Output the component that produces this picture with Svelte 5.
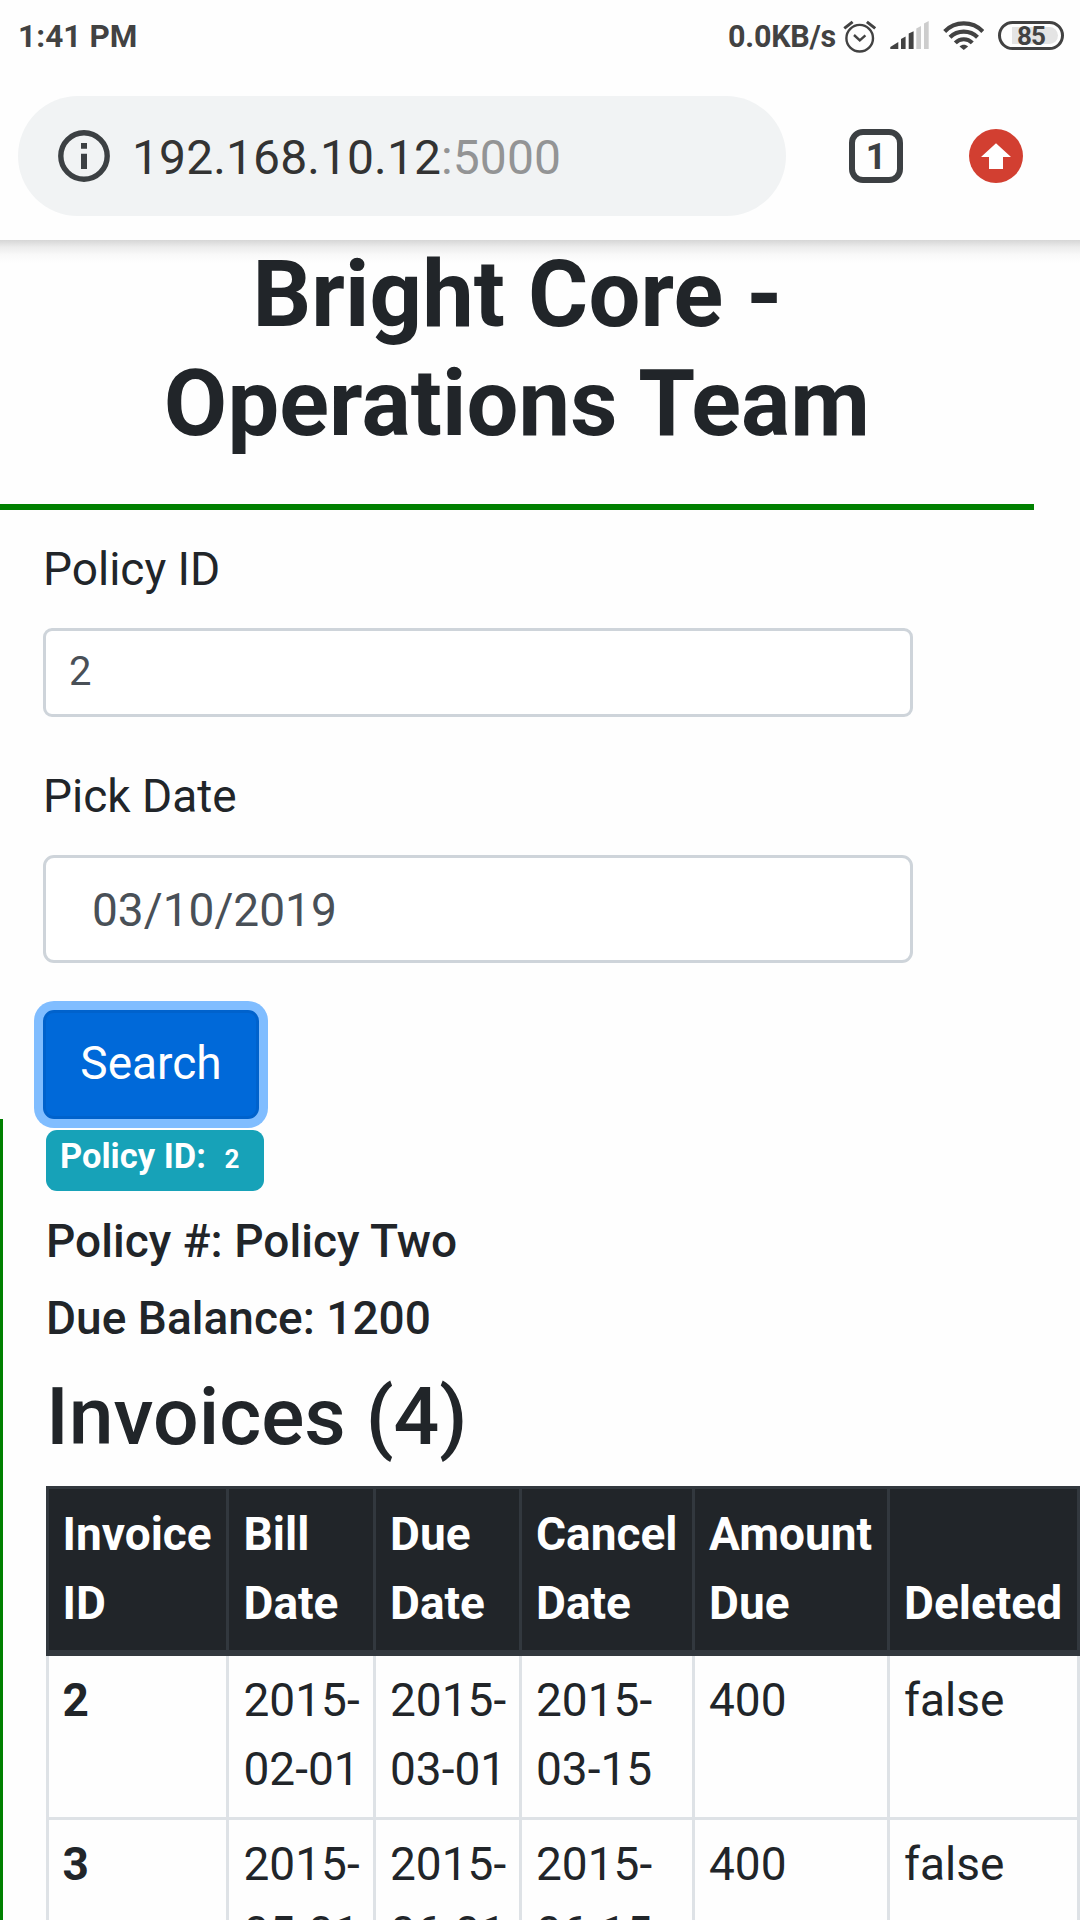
<script>
  let policyId = $state('2');
  let date = $state('03/10/2019');

  const columns = [
    ['Invoice', 'ID'],
    ['Bill', 'Date'],
    ['Due', 'Date'],
    ['Cancel', 'Date'],
    ['Amount', 'Due'],
    ['Deleted'],
  ];

  const invoices = [
    { id: 2, dates: [['2015-', '02-01'], ['2015-', '03-01'], ['2015-', '03-15']], amount: 400, deleted: false },
    { id: 3, dates: [['2015-', '05-01'], ['2015-', '06-01'], ['2015-', '06-15']], amount: 400, deleted: false },
  ];
</script>

<div class="screen">
  <div class="status">
    <span class="time">1:41 PM</span>
    <span class="speed">0.0KB/s</span>
    <svg class="alarm" width="35" height="72" viewBox="842 0 35 72" fill="none" stroke="#424242">
      <circle cx="859.7" cy="38.2" r="13.3" stroke-width="2.4" />
      <path d="M844.3 28.4l8.3-6.6M866.9 21.8l8.3 6.6" stroke-width="3" />
      <path d="M854 35l5.8 5.3 5.6-5" stroke-width="2.4" />
    </svg>
    <svg class="signal" width="39" height="72" viewBox="890 0 39 72">
      <path fill="#424242" d="M890.3 49v-2l8-5v7zM901 49V39l4.6-2.5V49zM908.7 49V33.500l4.9-2.300V49z" />
      <path fill="#cdcdcd" d="M916.300 49V28.500l4.700-2.500V49zM924 49V23.500l4.700-2.500V49z" />
    </svg>
    <svg class="wifi" width="41" height="72" viewBox="943 0 41 72" fill="none" stroke="#424242" stroke-width="4.100">
      <path d="M944.700 31.500C955 20.700 972.500 20.700 982.800 31.500" />
      <path d="M950 37.300C957.500 29.700 970 29.700 977.500 37.300" />
      <path d="M955.300 42.900C960 38 967.500 38 972.300 42.900" />
      <path d="M963.800 50l-4.300-3.500c2.500-2.300 6.100-2.300 8.600 0z" fill="#424242" stroke="none" />
    </svg>
    <div class="battery"><span>85</span></div>
  </div>

  <div class="toolbar">
    <div class="address">
      <svg width="52" height="52" viewBox="0 0 52 52">
        <circle cx="26" cy="26" r="23.200" fill="none" stroke="#3c4043" stroke-width="5.400" />
        <path fill="#3c4043" d="M23 13h6v5.700h-6zM23 23.700h6V39h-6z" />
      </svg>
      <span class="url">192.168.10.12<span class="port">:5000</span></span>
    </div>
    <div class="tabs">1</div>
    <svg class="update" width="54" height="54" viewBox="0 0 54 54">
      <circle cx="27" cy="27" r="27" fill="#d23f31" />
      <path fill="#fff" d="M27 14.300L42 28h-8v12H20V28h-8z" />
    </svg>
  </div>

  <main>
    <h1>Bright Core -<br />Operations Team</h1>

    <form>
      <label for="policy">Policy ID</label>
      <input id="policy" class="small" bind:value={policyId} />
      <label for="date">Pick Date</label>
      <input id="date" class="large" bind:value={date} />
      <button type="button">Search</button>
    </form>

    <section>
      <div class="badge">Policy ID: <span>2</span></div>
      <h6>Policy #: Policy Two</h6>
      <h6>Due Balance: 1200</h6>
      <h2>Invoices (4)</h2>

      <div class="table">
        {#each columns as lines}
          <div class="cell head">
            {#each lines as line}<div>{line}</div>{/each}
          </div>
        {/each}
        {#each invoices as invoice}
          <div class="cell id">{invoice.id}</div>
          {#each invoice.dates as lines}
            <div class="cell">
              {#each lines as line}<div>{line}</div>{/each}
            </div>
          {/each}
          <div class="cell">{invoice.amount}</div>
          <div class="cell">{invoice.deleted}</div>
        {/each}
      </div>
    </section>
  </main>
</div>

<style>
  :global(body) {
    margin: 0;
    background: #fff;
  }
  .screen {
    width: 1080px;
    height: 1920px;
    overflow: hidden;
    background: #fefefe;
    color: #212529;
    font-family: Roboto, 'Liberation Sans', sans-serif;
    font-size: 46px;
    line-height: 69px;
  }
  .screen * {
    box-sizing: border-box;
  }
  svg {
    display: block;
    flex: none;
  }

  .status {
    display: flex;
    height: 72px;
    padding: 0 16px 0 18px;
    color: #424242;
    font-size: 31.500px;
    font-weight: 700;
    letter-spacing: 0.1px;
    line-height: 74px;
    white-space: nowrap;
  }
  .speed {
    margin-left: auto;
    font-size: 30.500px;
    letter-spacing: -0.25px;
    line-height: 73px;
  }
  .alarm {
    margin-left: 6px;
  }
  .signal {
    margin-left: 13px;
  }
  .wifi {
    margin-left: 14px;
  }
  .battery {
    width: 66px;
    height: 29px;
    margin: 21px 0 0 14px;
    padding: 3px;
    border: 3px solid #424242;
    border-radius: 15px;
  }
  .battery span {
    display: block;
    width: 46px;
    height: 17px;
    margin-left: 8px;
    border-radius: 0 9px 9px 0;
    background: #e4e4e4;
    font-size: 26px;
    letter-spacing: -1px;
    line-height: 19px;
    text-indent: 5px;
  }

  .toolbar {
    display: flex;
    align-items: center;
    height: 168px;
    padding: 0 57px 0 18px;
  }
  .address {
    display: flex;
    align-items: center;
    width: 768px;
    height: 120px;
    padding-left: 40px;
    border-radius: 60px;
    background: #f1f3f4;
  }
  .url {
    margin-left: 22px;
    color: #333;
    font-size: 48px;
    letter-spacing: 0.1px;
    line-height: 120px;
    padding-top: 3px;
  }
  .port {
    color: #939495;
  }
  .tabs {
    width: 54px;
    height: 54px;
    margin-left: 63px;
    border: 6px solid #3c4043;
    border-radius: 14px;
    color: #3c4043;
    font-size: 36px;
    font-weight: 700;
    line-height: 44px;
    text-align: center;
  }
  .update {
    margin-left: 66px;
  }

  main {
    height: 1680px;
    background: linear-gradient(#d6d6d6, #ececec 7px, #f9f9f9 15px, #fefefe 23px);
  }
  h1 {
    width: 1034px;
    height: 270px;
    margin: 0;
    border-bottom: 6px solid #008000;
    font-size: 92px;
    font-weight: 700;
    letter-spacing: 0.12px;
    line-height: 109px;
    text-align: center;
    text-indent: 1px;
  }
  form {
    display: flex;
    flex-direction: column;
    align-items: flex-start;
    height: 609px;
    padding: 25px 0 0 43px;
  }
  label {
    height: 69px;
  }
  input {
    display: block;
    width: 870px;
    margin: 0;
    border: 3px solid #ced4da;
    background: #fff;
    color: #495057;
    font-family: inherit;
  }
  .small {
    height: 89px;
    margin: 24px 0 45px;
    padding: 0 23px 2px;
    border-radius: 9px;
    font-size: 40px;
  }
  .large {
    height: 109px;
    margin: 24px 0 47px;
    padding: 2px 46px 0;
    border-radius: 11px;
    font-size: 46px;
  }
  button {
    width: 216px;
    height: 109px;
    padding: 0 0 2px;
    border: 3px solid #0062cc;
    border-radius: 11px;
    background: #0069d9;
    box-shadow: 0 0 0 9px #80bdff;
    color: #fff;
    font: 400 46px/101px Roboto, 'Liberation Sans', sans-serif;
  }

  section {
    display: flow-root;
    height: 801px;
    padding-left: 43px;
    border-left: 3px solid #008000;
  }
  .badge {
    width: 218px;
    height: 61px;
    margin-top: 11px;
    padding-left: 14px;
    border-radius: 11px;
    background: #17a2b8;
    color: #fff;
    font-size: 34.500px;
    font-weight: 700;
    line-height: 53px;
    white-space: nowrap;
  }
  .badge span {
    margin-left: 10px;
    font-size: 26px;
  }
  h6 {
    height: 55px;
    margin: 22px 0 0;
    font-size: 46px;
    font-weight: 500;
    letter-spacing: 0.03px;
    line-height: 55px;
  }
  .badge + h6 {
    margin-top: 23px;
  }
  h2 {
    height: 96px;
    margin: 23px 0 0;
    font-size: 80.500px;
    font-weight: 500;
    line-height: 96px;
  }
  .table {
    display: grid;
    grid-template-columns: 183px 147px 146px 173px 195px 190px;
    grid-template-rows: 170px 164px 164px;
    width: 1034px;
    margin-top: 21px;
  }
  .cell {
    padding: 10px 0 0 14px;
    border-right: 3px solid #dee2e6;
    border-bottom: 3px solid #dee2e6;
  }
  .cell:nth-child(6n + 1) {
    padding-left: 13.500px;
    border-left: 3px solid #dee2e6;
  }
  .cell:nth-child(6n + 2) {
    padding-left: 14.500px;
  }
  .cell.head {
    display: flex;
    flex-direction: column;
    justify-content: flex-end;
    padding-bottom: 12px;
    border-color: #32383e;
    border-top: 3px solid #32383e;
    border-bottom-width: 6px;
    background: #212529;
    color: #fff;
    font-weight: 700;
  }
  .id {
    font-weight: 700;
  }
</style>
